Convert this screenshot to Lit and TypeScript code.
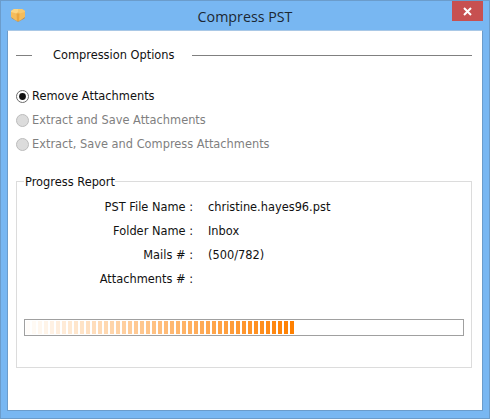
import { LitElement, html, css, svg } from "lit";
import { customElement } from "lit/decorators.js";

const segments = Array.from({ length: 45 }, (_, i) => i);

@customElement("app-root")
export class AppRoot extends LitElement {
  static styles = css`
    :host {
      display: block;
      width: 490px;
      height: 419px;
      font-family: "DejaVu Sans", Verdana, sans-serif;
      font-size: 11.4px;
      color: #111;
    }
    * { box-sizing: border-box; }
    .window {
      width: 490px;
      height: 419px;
      background: #78b7f2;
      border: 1px solid #6b9ccb;
      display: flex;
      flex-direction: column;
      overflow: hidden;
    }
    .titlebar {
      height: 29px;
      flex: none;
      display: grid;
      grid-template-columns: 1fr auto 1fr;
      align-items: start;
    }
    .icon { margin: 7px 0 0 9px; display: block; }
    .title {
      font-family: "Open Sans", "Noto Sans", sans-serif;
      font-size: 14.25px;
      line-height: 20px;
      padding-top: 6px;
      color: #1c2733;
    }
    .close-wrap { display: flex; justify-content: flex-end; padding-right: 6px; }
    .close {
      width: 31px;
      height: 20px;
      background: #c75050;
      display: flex;
      align-items: center;
      justify-content: center;
    }
    .client {
      width: 476px;
      height: 381px;
      margin-left: 6px;
      flex: none;
      background: #fff;
      border: 1px solid #6b9ccb;
      border-top-color: #a9c8e6;
      padding: 15px 10px 0 8px;
    }
    .section {
      display: flex;
      align-items: center;
      height: 18px;
    }
    .section .tick { width: 16px; height: 1px; background: #808080; }
    .section .name { margin: 0 18px 0 21px; white-space: nowrap; }
    .section .rule { flex: 1; height: 1px; background: #808080; }
    .options {
      display: flex;
      flex-direction: column;
      gap: 10px;
      margin-top: 25px;
    }
    .option {
      display: flex;
      align-items: center;
      gap: 3px;
      height: 14px;
      white-space: nowrap;
    }
    .option.off { color: #7f7f7f; }
    .radio { display: block; flex: none; }
    fieldset {
      margin: 22px 0 0;
      padding: 0 7px;
      height: 195px;
      border: 1px solid #dcdcdc;
      display: block;
      min-width: 0;
    }
    legend { padding: 2px 0 0 1px; margin-left: 0; line-height: 14px; }
    .row {
      display: grid;
      grid-template-columns: 169px 1fr;
      column-gap: 15px;
      height: 24px;
      line-height: 14px;
    }
    .rows { padding-top: 11px; }
    .row .k { text-align: right; white-space: nowrap; }
    .bar {
      margin-top: 23px;
      height: 17px;
      border: 1px solid #a0a0a0;
      padding: 1px 0 1px 1px;
      display: flex;
      gap: 2px;
    }
    .seg { width: 4px; background: #ff8000; flex: none; }
  `;

  radio(on: boolean) {
    return html`<svg class="radio" width="13" height="13" viewBox="0 0 13 13">
      <circle cx="6.5" cy="6.5" r="6" fill=${on ? "#fff" : "#dcdcdc"} stroke=${on ? "#6a6a6a" : "#bcbcbc"} />
      ${on ? svg`<circle cx="6.5" cy="6.5" r="3.4" fill="#111" />` : ""}
    </svg>`;
  }

  render() {
    const rows: [string, string][] = [
      ["PST File Name :", "christine.hayes96.pst"],
      ["Folder Name :", "Inbox"],
      ["Mails # :", "(500/782)"],
      ["Attachments # :", ""],
    ];
    return html`<div class="window">
      <div class="titlebar">
        <svg class="icon" width="16" height="14" viewBox="0 0 16 14">
          <path d="M1 3 4 1h8l3 2v6l-4 3-3 1.500L5 12 1 9z" fill="#f4bc5c" />
          <path d="M1 3 4 1h4v3L6.500 5.500 1 4z" fill="#fbd685" />
          <path d="M8 1h4l3 2v1L9.500 5.500 8 4z" fill="#f7c96f" />
          <path d="M6.500 5.500H9.500L9 13 7 13z" fill="#eaa63f" />
          <path d="M1 9 5 12 8 13.500 11 12 15 9 14.500 10.500 8 14 2 10.500z" fill="#cf8a2e" />
        </svg>
        <div class="title">Compress PST</div>
        <div class="close-wrap">
          <div class="close">
            <svg width="9" height="9" viewBox="0 0 9 9">
              <path d="M1 1 8 8M8 1 1 8" stroke="#fff" stroke-width="2" />
            </svg>
          </div>
        </div>
      </div>
      <div class="client">
        <div class="section">
          <span class="tick"></span>
          <span class="name">Compression Options</span>
          <span class="rule"></span>
        </div>
        <div class="options">
          <label class="option">${this.radio(true)}Remove Attachments</label>
          <label class="option off">${this.radio(false)}Extract and Save Attachments</label>
          <label class="option off">${this.radio(false)}Extract, Save and Compress Attachments</label>
        </div>
        <fieldset>
          <legend>Progress Report</legend>
          <div class="rows">
            ${rows.map(([k, v]) => html`<div class="row"><span class="k">${k}</span><span>${v}</span></div>`)}
          </div>
          <div class="bar">
            ${segments.map((i) => html`<span class="seg" style="opacity:${((i + 1) / 45).toFixed(3)}"></span>`)}
          </div>
        </fieldset>
      </div>
    </div>`;
  }
}
